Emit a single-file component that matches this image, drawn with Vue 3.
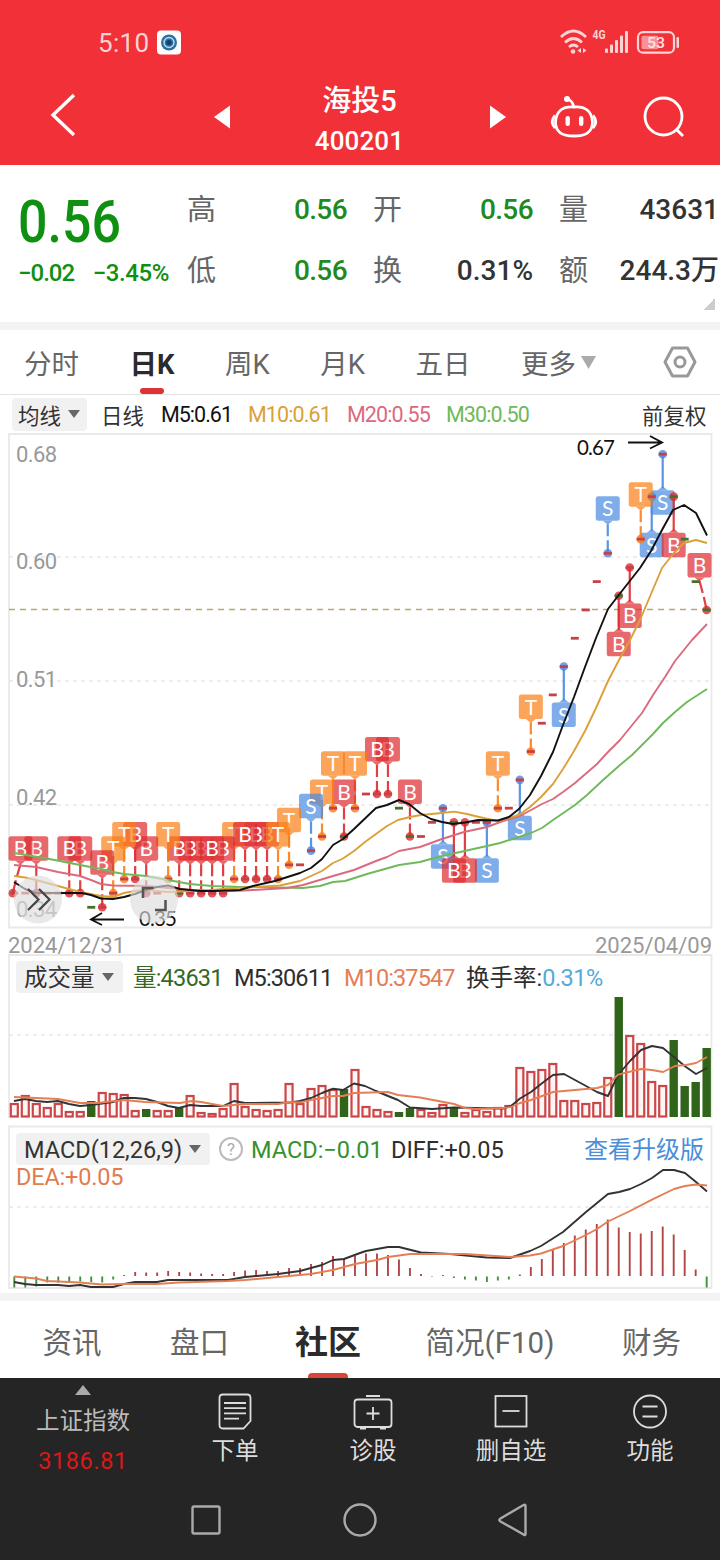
<template>
  <div class="page">
    <!-- Header -->
    <header class="header">
      <div class="status-bar">
        <span class="time">5:10</span>
        <svg class="app-badge" width="26" height="25" viewBox="0 0 26 25">
          <rect x="1" y="0.5" width="24" height="24" rx="4" fill="#fff" />
          <circle cx="13" cy="12.5" r="8" fill="#2a6f9e" />
          <circle cx="13" cy="12.5" r="5" fill="none" stroke="#b9dcee" stroke-width="1.4" />
          <circle cx="13" cy="12.5" r="2.6" fill="#17406e" />
        </svg>
        <svg class="signals" width="124" height="28" viewBox="0 0 124 28">
          <g fill="none" stroke="#fbd3d5" stroke-width="2.8">
            <path d="M5 9Q17.500 -3 30 9" />
            <path d="M9 14.500Q17.500 6.500 26 14.500" />
            <path d="M13 19Q17.500 15 22 19" />
          </g>
          <circle cx="17" cy="23.500" r="2.300" fill="#fbd3d5" />
          <path d="M25 20v5l-3.500-2.500zM27 20v5l3.500-2.500z" fill="#fbd3d5" />
          <text x="36.500" y="11" font-size="12.500" font-weight="700" fill="#fbd3d5" textLength="13" lengthAdjust="spacingAndGlyphs">4G</text>
          <g fill="#fbd3d5">
            <rect x="49" y="20.500" width="3" height="4.500" rx="1" />
            <rect x="54" y="16.500" width="3" height="8.500" rx="1" />
            <rect x="59" y="12" width="3" height="13" rx="1" />
            <rect x="64" y="7.500" width="3" height="17.500" rx="1" />
            <rect x="69" y="3" width="3" height="22" rx="1" />
          </g>
          <rect x="82" y="4.200" width="36" height="20.500" rx="5" fill="none" stroke="#fbd3d5" stroke-width="2.200" />
          <rect x="85.500" y="7.800" width="17" height="13.500" rx="2" fill="#f89297" />
          <rect x="120.500" y="9" width="2.500" height="11" rx="1" fill="#fbd3d5" />
          <text x="91" y="20" font-size="15.500" font-weight="500" fill="#fde4e5" textLength="18" lengthAdjust="spacingAndGlyphs">53</text>
        </svg>
      </div>
      <div class="title-bar">
        <svg class="back" width="30" height="46" viewBox="0 0 30 46">
          <path d="M24 3L3 23L24 43" fill="none" stroke="#fff" stroke-width="3.400" />
        </svg>
        <svg width="16" height="24" viewBox="0 0 16 24"><path d="M16 -0.500v23L0 11z" fill="#fff" /></svg>
        <div class="title">
          <div class="stock-name">海投5</div>
          <div class="stock-code">400201</div>
        </div>
        <svg width="16" height="24" viewBox="0 0 16 24"><path d="M1 -0.500v23L17 11z" fill="#fff" /></svg>
        <svg class="robot" width="48" height="44" viewBox="0 0 48 44">
          <g fill="none" stroke="#fff" stroke-width="2.800">
            <path d="M24 11C35 10 42 15 42.500 26C42.500 37 35 40 24 40S5.500 37 5.500 26C6 15 13 10 24 11z" />
            <path d="M23.500 11Q23 4.500 17 3M5 19.500Q-0.500 26 5 32M43 19.500Q48.500 26 43 32" />
          </g>
          <circle cx="17" cy="3" r="3" fill="#fff" />
          <rect x="15.500" y="20" width="4.400" height="10" rx="2.200" fill="#fff" />
          <rect x="29" y="20" width="4.400" height="10" rx="2.200" fill="#fff" />
        </svg>
        <svg class="search" width="44" height="44" viewBox="0 0 44 44">
          <circle cx="22.500" cy="20.500" r="18.500" fill="none" stroke="#fff" stroke-width="2.800" />
          <path d="M35 33L42 40" stroke="#fff" stroke-width="2.800" />
        </svg>
      </div>
    </header>

    <!-- Quote summary -->
    <section class="quote">
      <div class="quote-price">
        <div class="price">0.56</div>
        <div class="change"><span>−0.02</span><span class="percent">−3.45%</span></div>
      </div>
      <div class="quote-grid">
        <div v-for="cell in quoteCells" :key="cell.label" class="quote-cell">
          <span class="quote-label">{{ cell.label }}</span>
          <span class="quote-value" :class="{ down: cell.down }">{{ cell.value }}</span>
        </div>
      </div>
      <i class="quote-corner"></i>
    </section>

    <nav class="period-tabs">
      <span v-for="tab in periods" :key="tab" class="period" :class="{ active: tab === '日K' }">{{ tab }}</span>
      <span class="period more">更多<svg width="15" height="13" viewBox="0 0 15 13"><path d="M0 0h15L7.500 13z" fill="#aaa" /></svg></span>
      <svg class="setting" width="34" height="32" viewBox="0 0 34 32">
        <path d="M9.500 2H24.500L32 16L24.500 30H9.500L2 16z" fill="none" stroke="#999" stroke-width="3" stroke-linejoin="round" />
        <circle cx="17" cy="16" r="5" fill="none" stroke="#999" stroke-width="3" />
      </svg>
    </nav>

    <div class="ma-legend">
      <span class="picker">均线<i class="caret"></i></span>
      <span class="ma-name">日线</span>
      <span class="ma5">M5:0.61</span>
      <span class="ma10">M10:0.61</span>
      <span class="ma20">M20:0.55</span>
      <span class="ma30">M30:0.50</span>
      <span class="adjust">前复权</span>
    </div>

    <!-- K line chart -->
    <svg class="chart" width="720" height="495" viewBox="0 433 720 495">
      <path d="M9 434H711.500V927.500H9z" class="frame" />
      <path v-for="y in [557, 681, 805]" :key="y" :d="`M9 ${y}H711`" class="grid-line" />
      <g class="axis">
        <text x="16" y="461.500" textLength="41">0.68</text>
        <text x="16" y="568.500" textLength="41">0.60</text>
        <text x="16" y="686.500" textLength="41">0.51</text>
        <text x="16" y="805" textLength="41">0.42</text>
        <text x="16" y="916.500" textLength="41">0.34</text>
      </g>
      <path d="M9 609.500H711" stroke="#bda66b" stroke-width="1.700" stroke-dasharray="6 5" />
      <g v-for="m in orderedMarks" :key="m.i">
        <circle :cx="m.dotX" :cy="m.y" r="4.300" :fill="m.color" fill-opacity="0.8" />
        <path :d="m.stem" :stroke="m.color" stroke-opacity="0.9" stroke-width="2.200" />
        <path :d="m.tip" :fill="m.color" fill-opacity="0.7" />
        <rect :x="m.labelX - 12" :y="m.top" width="24" height="24.500" rx="2.500" :fill="m.color" fill-opacity="0.7" />
        <text :x="m.labelX" :y="m.top + 20" class="mark-text">{{ m.type }}</text>
      </g>
      <path
        v-for="(p, i) in prices"
        :key="i"
        :d="`M${candleX(i) - 4} ${priceY(p)}h8`"
        :stroke="greens.includes(i) ? '#45702c' : '#c84047'"
        stroke-width="2.800"
      />
      <polyline :points="ma30" stroke="#6fb95a" class="line" />
      <polyline :points="ma20" stroke="#db6a7e" class="line" />
      <polyline :points="ma10" stroke="#dba038" class="line" />
      <polyline :points="ma5" stroke="#111" class="line" />
      <g fill="none" stroke="#111" stroke-width="1.900">
        <path d="M124 919.500H91M102 913L91 919.500L102 925" />
        <path d="M628 442.500H662M650 436L662 442.500L650 448.500" />
      </g>
      <text x="139" y="926" class="extreme" textLength="38">0.35</text>
      <text x="577" y="454.500" class="extreme" textLength="38">0.67</text>
      <circle cx="38" cy="899.500" r="24" fill="#ddd" fill-opacity="0.65" />
      <path d="M28 889L38.500 899.500L28 910M39 889L49.500 899.500L39 910" fill="none" stroke="#444" stroke-width="2.200" />
      <circle cx="154" cy="899.500" r="24" fill="#ddd" fill-opacity="0.65" />
      <path d="M143 898V888H153.500M155 910H165.500V900" fill="none" stroke="#555" stroke-width="2.600" />
    </svg>
    <div class="dates"><span>2024/12/31</span><span>2025/04/09</span></div>

    <!-- Volume -->
    <section class="panel volume-panel">
      <div class="panel-head volume-head">
        <span class="picker">成交量<i class="caret"></i></span>
        <span class="vol">量:43631</span>
        <span class="dark vol-m5">M5:30611</span>
        <span class="orange vol-m10">M10:37547</span>
        <span class="dark">换手率:<b class="rate">0.31%</b></span>
      </div>
      <svg class="chart overlay" width="720" height="172" viewBox="0 954 720 172">
        <path d="M9 1118V955H711.500V1118" class="frame" />
        <path d="M9 1035H711" class="grid-line" />
        <rect
          v-for="(top, i) in volumeTops"
          :key="i"
          :x="candleX(i) - (volumeGreens.includes(i) ? 4.2 : 3.5)"
          :y="volumeGreens.includes(i) ? top : top + 1"
          :width="volumeGreens.includes(i) ? 8.4 : 7"
          :height="volumeGreens.includes(i) ? 1117 - top : 1115.500 - top"
          :fill="volumeGreens.includes(i) ? '#30641a' : '#fff5f4'"
          :stroke="volumeGreens.includes(i) ? 'none' : '#cb4648'"
          stroke-width="2.200"
        />
        <polyline :points="volumeMa5" stroke="#333" class="line" />
        <polyline :points="volumeMa10" stroke="#e57e55" class="line" />
      </svg>
    </section>

    <!-- MACD -->
    <section class="panel macd-panel">
      <div class="panel-head macd-head">
        <span class="picker">MACD(12,26,9)<i class="caret"></i></span>
        <span class="help">?</span>
        <span class="macd-value">MACD:−0.01</span>
        <span class="dark diff-value">DIFF:+0.05</span>
        <span class="upgrade">查看升级版</span>
      </div>
      <div class="dea">DEA:+0.05</div>
      <svg class="chart overlay" width="720" height="167" viewBox="0 1126 720 167">
        <path d="M9 1126.500H711.500V1288H9z" class="frame" />
        <path d="M9 1207H711" class="grid-line" />
        <path
          v-for="(v, i) in macdBars"
          :key="i"
          :d="`M${candleX(i)} ${v > 0 ? 1276 : 1276.500}v${-v}`"
          :stroke="v > 0 ? '#b34546' : '#40903a'"
          stroke-width="1.900"
        />
        <polyline :points="diffLine" stroke="#333" class="line" />
        <polyline :points="deaLine" stroke="#e57e55" class="line" />
      </svg>
    </section>

    <nav class="info-tabs">
      <span>资讯</span>
      <span>盘口</span>
      <span class="active">社区</span>
      <span>简况(F10)</span>
      <span>财务</span>
    </nav>

    <!-- Bottom bar -->
    <footer class="bottom">
      <div class="toolbar">
        <div class="index">
          <i class="up"></i>
          <span class="index-name">上证指数</span>
          <span class="index-value">3186.81</span>
        </div>
        <div class="tool">
          <svg width="40" height="40" viewBox="0 0 40 40">
            <path d="M8 3.500H32Q35.500 3.500 35.500 7V30L28.500 37.500H8Q4.500 37.500 4.500 34V7Q4.500 3.500 8 3.500z" />
            <path d="M9 12H31M9 17.200H31M9 22.400H31M9 27.600H24" />
          </svg>
          <span>下单</span>
        </div>
        <div class="tool">
          <svg width="40" height="40" viewBox="0 0 40 40">
            <rect x="1.500" y="8.500" width="37" height="27.500" rx="3" />
            <path d="M13 5H27M20 16V29M13.500 22.500H26.500M7 37.500H13M27 37.500H33" />
          </svg>
          <span>诊股</span>
        </div>
        <div class="tool">
          <svg width="40" height="40" viewBox="0 0 40 40">
            <rect x="4.500" y="5" width="31" height="30.500" />
            <path d="M11.500 20H28.500" />
          </svg>
          <span>删自选</span>
        </div>
        <div class="tool">
          <svg width="40" height="40" viewBox="0 0 40 40">
            <circle cx="20" cy="20.500" r="16" />
            <path d="M12.500 15.500H27.500M12.500 25.500H27.500" />
          </svg>
          <span>功能</span>
        </div>
      </div>
      <div class="system-nav">
        <svg width="32" height="34" viewBox="0 0 32 34"><rect x="2.500" y="3.500" width="27" height="27" rx="1.500" /></svg>
        <svg width="34" height="34" viewBox="0 0 34 34"><circle cx="17" cy="17" r="15.500" /></svg>
        <svg width="32" height="34" viewBox="0 0 32 34"><path d="M28.500 3V31Q28.500 33 26.500 31.500L3.500 18.500Q1 17 3.500 15.500L26.500 2Q28.500 1 28.500 3z" /></svg>
      </div>
    </footer>
  </div>
</template>

<script setup>
import { computed } from 'vue'

const quoteCells = [
  { label: '高', value: '0.56', down: true },
  { label: '开', value: '0.56', down: true },
  { label: '量', value: '43631' },
  { label: '低', value: '0.56', down: true },
  { label: '换', value: '0.31%' },
  { label: '额', value: '244.3万' }
]

const periods = ['分时', '日K', '周K', '月K', '五日']

const candleX = (i) => 14.3 + 10.99 * i
const priceY = (p) => 907.3 - (p - 35) * 14.16

// daily closes, in hundredths
const prices = [
  36, 36, 36, 36, 36, 36, 36, 35, 35, 36, 37, 37, 36, 36, 37, 36,
  36, 36, 36, 36, 37, 37, 37, 37, 37, 38, 38, 39, 40, 42, 40, 42,
  43, 43, 43, 42, 40, 40, 41, 42, 41, 41, 41, 41, 42, 42, 44, 46,
  48, 50, 52, 54, 56, 58, 60, 57, 59, 61, 64, 67, 64, 61, 58, 56
]
const greens = [7, 15, 30, 35, 36, 40, 55, 60, 61, 62, 63]

// [candle, type, label below the price]
const marks = [
  [0, 'B'], [2, 'B'], [5, 'B'], [6, 'B'], [8, 'B'], [9, 'T'], [10, 'T'], [11, 'B'],
  [12, 'B'], [14, 'T'], [15, 'B'], [16, 'B'], [17, 'B'], [18, 'B'], [19, 'B'],
  [20, 'T'], [21, 'B'], [22, 'B'], [23, 'B'], [24, 'T'], [25, 'T'], [27, 'S'],
  [28, 'T'], [29, 'T'], [30, 'B'], [31, 'T'], [33, 'B'], [34, 'B'], [36, 'B'],
  [39, 'S', true], [40, 'B', true], [41, 'B', true], [43, 'S', true], [44, 'T'],
  [46, 'S', true], [47, 'T'], [50, 'S', true], [54, 'S'], [55, 'B', true],
  [56, 'B', true], [57, 'T'], [58, 'S', true], [59, 'S', true], [60, 'B', true], [63, 'B']
]
const markColors = { B: '#de2a2e', T: '#fa7d14', S: '#478ae1' }
const onTop = [18, 21, 24, 40, 60]

const orderedMarks = computed(() => {
  const list = marks.map(([i, type, below]) => {
    const x = candleX(i)
    const y = priceY(prices[i])
    // labels stay inside the frame
    const labelX = Math.min(Math.max(x, 20.5), 699.5)
    const dotX = i === 0 ? x - 1.5 : x
    const top = below ? y + 36 : y - 57
    const stem = below
      ? `M${x} ${y}V${y + 34}`
      : `M${labelX} ${y - 29}L${labelX + (dotX - labelX) * 0.45} ${y - 17}M${labelX + (dotX - labelX) * 0.6} ${y - 13}L${dotX} ${y}`
    const tip = below
      ? `M${x - 5} ${top}L${x} ${top - 4}L${x + 5} ${top}z`
      : `M${labelX - 5} ${top + 24.5}L${labelX} ${top + 28.5}L${labelX + 5} ${top + 24.5}z`
    return { i, type, y, labelX, dotX, top, stem, tip, color: markColors[type] }
  })
  const rank = (m) => (onTop.includes(m.i) ? -100 : 0) + m.i
  return list.sort((a, b) => rank(b) - rank(a))
})

const ma5 = '14,882 25,889 36,893 58,893 82,893 91,895 101,898.5 113,899 124,897 135,894 146,890 157,887 168,885.5 180,889 200,891 213,891 240,890 253,886 275,881 300,873 311,868 322,859 333,845 343,839 354,829 376,808 387,805 399,800 409,804 420,813 431,819 442,822 453,824 465,822.5 478,820 498,820.5 509,817 519,809 530,795 541,776 553,752 563,725 574,697 585,667 596,638 608,609 618,596 629,582 640,568 651,551 662,530 673,510 684,505 696,513 707,535.5'
const ma10 = '14,876 25,877.5 36,880 47,883 58,886 69,889 80,892 101,896 113,897 124,893 135,891 146,890 168,892 190,891 212,890 234,888 256,887 280,885.5 300,881 311,876 322,871 333,863 343,858.5 354,851 365,842 376,834 387,826 398,820 410,817 421,815 442,813 454,811.6 467,814 477,816.5 488,819 498,821 509,818 519,815 530,807 541,797 553,784 563,769 574,751 585,731 596,708 608,681 619,660 630,640 640,620 651,594 662,568 673,554 684,543 696,540 707,543'
const ma20 = '14,865 36,867 58,872 80,876 91,880 101,884 113,885.5 146,886 168,888 190,890 212,891 234,891 253,890 287,888 303,885 333,876 354,870 376,861 387,857 399,851 420,847 442,839 464,832 487,827 503,821 520,816 542,804 553,799 563,792 575,783 597,764 608,752 620,740 633,724 642,713 653,695 665,677 675,661 692,640 707,624'
const ma30 = '14,853 47,858.5 80,865 101,869 113,872 124,874 146,876 168,880 190,884 212,886 240,887 253,887 303,888 320,886 333,882 345,881 367,874 399,865 420,862 438,857 460,852 487,846 500,843 531,833 542,828 553,820 575,805 587,795 602,781 620,765 632,755 653,734 663,723 675,712 687,702 707,689'

const volumeTops = [
  1103, 1095, 1103, 1107, 1103, 1111, 1111, 1101, 1092, 1093, 1094, 1110, 1109, 1110, 1110, 1108,
  1095, 1112, 1113, 1108, 1083, 1106, 1109, 1110, 1109, 1083, 1103, 1088, 1085, 1089, 1089, 1069,
  1106, 1109, 1111, 1112, 1108, 1109, 1112, 1104, 1108, 1112, 1109, 1111, 1107, 1105, 1067, 1071,
  1069, 1063, 1100, 1100, 1103, 1102, 1077, 997, 1035, 1043, 1081, 1085, 1040, 1086, 1082, 1048
]
const volumeGreens = [7, 12, 15, 30, 35, 36, 40, 55, 60, 61, 62, 63]
const volumeMa5 = '14,1101 25,1099 36,1101 47,1102 58,1101 69,1104 80,1106 91,1105 113,1102 124,1098 135,1098 146,1099 157,1102 168,1106 179,1108 190,1105 201,1106 223,1106 234,1101 245,1103 290,1102.5 300,1101 311,1098 322,1093 333,1088.7 343,1090 354,1083.5 365,1086 376,1091 388,1096 398,1100 410,1107.5 432,1109 454,1107.5 475,1108 503,1108.5 511,1106 520,1098.5 531,1092 541,1084 553,1075 564,1074 597,1092 608,1096 618,1075 630,1061 641,1050 652,1046 663,1048 675,1058 686,1067 696,1074 707,1068'
const volumeMa10 = '14,1097 36,1098 58,1099 80,1103 97,1103 124,1100 145,1102 180,1103 192,1101 201,1102 223,1106 245,1104 278,1104 290,1102 300,1102.5 311,1100 333,1096 343,1096 354,1093 388,1092 398,1095 420,1097.5 454,1104 465,1108 476,1109 503,1108 511,1107 520,1103 531,1100 553,1092 564,1091 597,1088 608,1085 618,1074.6 641,1069 652,1070 663,1072 675,1066 686,1065 696,1063 707,1057'

const macdBars = [
  -11, -11, -10, -6, -6, -4.5, -5, -5.5, -6, -3, 1, 4, 3.5, 3.5, 5, 4,
  3.5, 2.5, 2, 2, 4, 5.5, 6, 5, 5, 8, 8, 12, 14, 20, 18, 20,
  22.5, 22.5, 21, 16.5, 8, 2, -0.5, 1, -1.5, -3, -4, -5.5, -4, -3, 1.5, 9,
  17, 26, 33, 40.5, 46.5, 52, 56.5, 48.5, 44, 42.5, 45, 49.5, 41.5, 26, 6.5, -11
]
const diffLine = '14,1282 25,1284 36,1285 58,1285 69,1286 80,1285 91,1287 113,1287 124,1284 135,1282 157,1282 168,1280 190,1280 228,1280 245,1277 278,1274 300,1271 322,1265 333,1260 344,1259 360,1253 366,1251 388,1247 399,1247 421,1252.5 450,1254 487,1257.5 510,1258 530,1251 541,1246 563,1232 586,1212 608,1194 619,1192 630,1189 641,1184 652,1178 663,1170 674,1170 685,1173 696,1182 707,1191.5'
const deaLine = '14,1276.5 36,1278.5 47,1281 80,1282.5 102,1284.5 124,1284 157,1284 179,1282.5 228,1281 245,1280 278,1277 311,1274 333,1270 355,1264 377,1260 388,1257 410,1254 465,1254 510,1257 530,1255.5 541,1253.5 563,1246 586,1235 597,1229 608,1221.5 630,1211 652,1199.7 674,1189 685,1186 696,1184.5 707,1185.5'
</script>

<style>
body {
  background: #fff;
}
</style>

<style scoped>
.page {
  width: 720px;
  height: 1560px;
  overflow: hidden;
  background: #fff;
  color: #333;
  font-family: Roboto, 'Noto Sans CJK SC', sans-serif;
  white-space: nowrap;
}

.page * {
  box-sizing: border-box;
}

svg {
  display: block;
  flex-shrink: 0;
  overflow: visible;
}

/* Header */
.header {
  height: 165px;
  background: #f13038;
  color: #fff;
}

.status-bar {
  height: 70px;
  padding: 14px 40px 0 98px;
  display: flex;
  align-items: center;
}

.time {
  width: 58px;
  padding-top: 2px;
  font-size: 26px;
  line-height: 30px;
  letter-spacing: 0.3px;
  color: #fbd3d5;
}

.signals {
  margin-left: auto;
}

.title-bar {
  height: 95px;
  padding: 0 33px 0 50px;
  display: flex;
  align-items: center;
}

.title-bar .back {
  margin-right: 134px;
  margin-bottom: 5px;
}

.title {
  width: 259px;
  padding-top: 6px;
  text-align: center;
}

.stock-name {
  font-size: 29px;
  line-height: 42px;
  font-weight: 500;
}

.stock-code {
  font-size: 26px;
  line-height: 39px;
  font-weight: 500;
  letter-spacing: 0.1px;
}

.robot {
  margin-left: 45px;
}

.search {
  margin-left: 43px;
}

/* Quote */
.quote {
  position: relative;
  height: 165px;
  padding-left: 18px;
  display: flex;
  border-bottom: 8px solid #f3f3f3;
}

.quote-price {
  width: 169px;
  color: #109010;
}

.price {
  padding-top: 29px;
  font-size: 60px;
  line-height: 56px;
  font-weight: 500;
  transform: scaleX(0.865);
  transform-origin: 0 0;
}

.change {
  display: flex;
  justify-content: space-between;
  width: 151px;
  padding-top: 7px;
  font-size: 24px;
  line-height: 32px;
  font-weight: 500;
  letter-spacing: -1px;
}

.percent {
  letter-spacing: -0.4px;
}

.quote-grid {
  display: grid;
  grid-template-columns: repeat(3, 160px);
  grid-template-rows: 61px 61px;
  column-gap: 26px;
  padding-top: 14px;
}

.quote-cell {
  display: flex;
  justify-content: space-between;
  align-items: center;
}

.quote-label {
  margin-top: -5px;
  font-size: 29px;
  color: #666;
}

.quote-value {
  font-size: 28px;
  font-weight: 500;
  line-height: 36px;
}

.quote-value.down {
  color: #1f8a1f;
  letter-spacing: -0.6px;
}

.quote-corner {
  position: absolute;
  right: 5px;
  bottom: 12px;
  width: 12px;
  height: 12px;
  background: linear-gradient(135deg, transparent 50%, #ccc 50%);
}

/* Period tabs */
.period-tabs {
  height: 65px;
  padding: 0 23px 0 24px;
  display: flex;
  align-items: center;
  border-bottom: 1px solid #e3e3e3;
  font-size: 27.5px;
  color: #666;
}

.period {
  position: relative;
  height: 64px;
  line-height: 70px;
  margin-right: 50.5px;
}

.period.active {
  font-weight: 700;
  color: #2b2b2b;
}

.period.active::after {
  content: '';
  position: absolute;
  left: 10px;
  bottom: 0;
  width: 24px;
  height: 6px;
  border-radius: 3px;
  background: #dc3434;
}

.period.more {
  display: flex;
  align-items: center;
  padding-top: 5px;
  margin-right: auto;
}

.period.more svg {
  margin-left: 5px;
  margin-bottom: 5px;
}

/* MA legend */
.ma-legend {
  height: 38px;
  display: grid;
  grid-template-columns: 89px 60px 87px 99px 99px 196px auto;
  align-items: center;
  padding-left: 12px;
  font-size: 21.5px;
}

.picker {
  display: flex;
  align-items: center;
  justify-self: start;
  height: 33px;
  padding: 0 7px 0 6px;
  border-radius: 4px;
  background: #f1f1f1;
}

.caret {
  margin-left: 7px;
  border-top: 8px solid #666;
  border-left: 6.5px solid transparent;
  border-right: 6.5px solid transparent;
}

.ma5 {
  color: #111;
  letter-spacing: -1px;
}

.ma10,
.ma20,
.ma30 {
  letter-spacing: -0.9px;
}

.ma10 {
  color: #dba038;
}

.ma20 {
  color: #db6a7e;
}

.ma30 {
  color: #6fb95a;
}

/* Charts */
.frame {
  fill: none;
  stroke: #e9e9e9;
  stroke-width: 1.8;
}

.grid-line {
  stroke: #e8e8e8;
  stroke-width: 1.6;
  stroke-dasharray: 4 4;
}

.line {
  fill: none;
  stroke-width: 1.9;
  stroke-linejoin: round;
}

.axis {
  font-size: 22px;
  fill: #999;
}

.mark-text {
  font-family: Lato, Roboto, sans-serif;
  font-size: 21px;
  fill: #fff;
  text-anchor: middle;
}

.extreme {
  font-family: Lato, Roboto, sans-serif;
  font-size: 20.5px;
  fill: #111;
}

.dates {
  height: 26px;
  padding: 5px 8px 0 8px;
  display: flex;
  justify-content: space-between;
  font-size: 22px;
  line-height: 26px;
  color: #999;
}

.panel {
  position: relative;
}

.overlay {
  position: absolute;
  left: 0;
  top: 0;
}

.panel-head {
  position: relative;
  z-index: 1;
  display: grid;
  align-items: center;
  height: 32px;
  padding-left: 16px;
  font-size: 23.5px;
  line-height: 30px;
}

.volume-panel {
  height: 172px;
  padding-top: 7px;
}

.volume-head {
  grid-template-columns: 117px 101px 110px 122px auto;
}

.panel-head .picker {
  height: 32px;
  padding: 2px 9px 0 8px;
}

.panel-head .caret {
  margin-bottom: 2px;
}

.volume-head > span:not(.picker) {
  margin-top: 1px;
}

.vol {
  color: #34691f;
  letter-spacing: -0.8px;
}

.dark {
  color: #2e2e2e;
}

.vol-m5 {
  letter-spacing: -0.9px;
}

.vol-m10 {
  letter-spacing: -0.9px;
}

.orange {
  color: #e57e55;
}

.rate {
  font-weight: 400;
  color: #57a9d8;
  letter-spacing: -0.5px;
}

.macd-panel {
  height: 175px;
  padding-top: 7px;
  border-bottom: 8px solid #f3f3f3;
}

.macd-head {
  grid-template-columns: 203px 32px 140px 193px auto;
}

.help {
  width: 24px;
  height: 24px;
  border: 2px solid #bbb;
  border-radius: 50%;
  font-size: 17px;
  line-height: 20px;
  text-align: center;
  color: #aaa;
}

.macd-value,
.diff-value {
  margin-top: 2px;
}

.macd-value {
  color: #36902b;
}

.upgrade {
  margin-top: 2px;
  font-size: 24px;
  color: #4a8fd8;
}

.dea {
  position: relative;
  z-index: 1;
  margin-top: -1px;
  padding-left: 16px;
  font-size: 23.5px;
  line-height: 26px;
  letter-spacing: -0.2px;
  color: #e07d50;
}

/* Info tabs */
.info-tabs {
  height: 77px;
  display: grid;
  grid-template-columns: 144px 111px 146px 178px 145px;
  grid-template-rows: 77px;
  font-size: 29.5px;
  line-height: 84px;
  text-align: center;
  color: #666;
}

.info-tabs .active {
  position: relative;
  font-size: 33px;
  font-weight: 700;
  color: #2b2b2b;
}

.info-tabs .active::after {
  content: '';
  position: absolute;
  left: 53px;
  bottom: 0;
  width: 40px;
  height: 5px;
  border-radius: 4px 4px 0 0;
  background: #db4439;
}

/* Bottom bar */
.bottom {
  position: relative;
  height: 182px;
  background: #252525;
}

.toolbar {
  height: 102px;
  display: grid;
  grid-template-columns: 166px 138px 138px 138px 140px;
  font-size: 23.5px;
  color: #ddd;
}

.index,
.tool {
  display: flex;
  flex-direction: column;
  align-items: center;
}

.index .up {
  margin-top: 7px;
  border-bottom: 10px solid #aaa;
  border-left: 8.5px solid transparent;
  border-right: 8.5px solid transparent;
}

.index-name {
  margin-top: 11px;
  line-height: 30px;
  color: #bbb;
}

.index-value {
  margin-top: 10px;
  line-height: 30px;
  letter-spacing: 0.6px;
  color: #d8191c;
}

.tool {
  padding-top: 13px;
}

.tool svg {
  fill: none;
  stroke: #ddd;
  stroke-width: 1.8;
}

.tool span {
  margin-top: 5px;
  line-height: 30px;
}

.system-nav {
  height: 80px;
  padding: 0 191px 0 190px;
  display: flex;
  align-items: center;
  justify-content: space-between;
}

.system-nav svg {
  fill: none;
  stroke: #aaa;
  stroke-width: 2.4;
}
</style>
